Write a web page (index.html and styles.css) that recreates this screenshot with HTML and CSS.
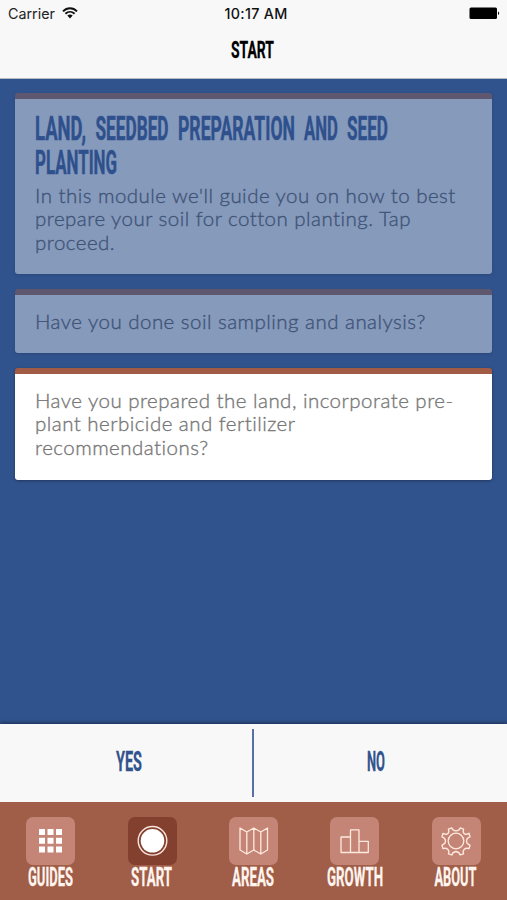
FILE: index.html
```
<!DOCTYPE html>
<html lang="en">
<head>
  <meta charset="UTF-8">
  <title>Start</title>
  <link rel="stylesheet" href="styles.css">
</head>
<body>
  <header class="header">
    <div class="status">
      <div class="carrier">
        <span>Carrier</span>
        <svg width="16" height="12" viewBox="0 0 16 12">
          <path d="M1 4.3C5 .2 11 .2 15 4.3M3.4 6.8c2.7-2.6 6.500-2.600 9.200 0" fill="none" stroke="#111" stroke-width="1.900"/>
          <path d="M5.300 8.600c1.600-1.400 3.800-1.400 5.400 0L8 11.400z" fill="#111"/>
        </svg>
      </div>
      <span class="time">10:17 AM</span>
      <svg class="battery" width="31" height="13" viewBox="0 0 31 13">
        <rect x=".5" y=".5" width="27.500" height="11.500" rx="1.500"/>
        <path d="M29 4.500c1.600.6 1.600 3 0 3.600z"/>
      </svg>
    </div>
    <svg class="heading" width="46" height="30" viewBox="0 0 46 30">
      <text class="narrow" x="1" y="24" textLength="43" lengthAdjust="spacingAndGlyphs">START</text>
    </svg>
  </header>

  <main class="cards">
    <section class="card done intro">
      <svg class="title" width="360" height="72" viewBox="0 0 360 72">
        <text class="narrow" x="0" y="31" textLength="51" lengthAdjust="spacingAndGlyphs">LAND,</text>
        <text class="narrow" x="60.500" y="31" textLength="73" lengthAdjust="spacingAndGlyphs">SEEDBED</text>
        <text class="narrow" x="143" y="31" textLength="117" lengthAdjust="spacingAndGlyphs">PREPARATION</text>
        <text class="narrow" x="269" y="31" textLength="34" lengthAdjust="spacingAndGlyphs">AND</text>
        <text class="narrow" x="312" y="31" textLength="41" lengthAdjust="spacingAndGlyphs">SEED</text>
        <text class="narrow" x="0" y="65" textLength="82" lengthAdjust="spacingAndGlyphs">PLANTING</text>
      </svg>
      <p>In this module we'll guide you on how to best<br>prepare your soil for cotton planting. Tap<br>proceed.</p>
    </section>
    <section class="card done">
      <p>Have you done soil sampling and analysis?</p>
    </section>
    <section class="card">
      <p>Have you prepared the land, incorporate pre-<br>plant herbicide and fertilizer<br>recommendations?</p>
    </section>
  </main>

  <div class="answers">
    <button class="yes">
      <svg width="28" height="36" viewBox="0 0 28 36">
        <text class="narrow" x="1" y="28" textLength="26" lengthAdjust="spacingAndGlyphs">YES</text>
      </svg>
    </button>
    <span class="divider"></span>
    <button class="no">
      <svg width="20" height="36" viewBox="0 0 20 36">
        <text class="narrow" x="1" y="28" textLength="18" lengthAdjust="spacingAndGlyphs">NO</text>
      </svg>
    </button>
  </div>

  <nav class="tabs">
    <a class="tab">
      <svg class="icon" viewBox="0 0 49 48">
        <path d="M13 12h6v6h-6zM21.500 12h6v6h-6zM30 12h6v6h-6zM13 20.800h6v6h-6zM21.500 20.800h6v6h-6zM30 20.800h6v6h-6zM13 29.500h6v6h-6zM21.500 29.500h6v6h-6zM30 29.500h6v6h-6z" fill="#fff"/>
      </svg>
      <svg class="label" width="48" height="32" viewBox="0 0 48 32">
        <text class="narrow" x="1" y="24" textLength="45" lengthAdjust="spacingAndGlyphs">GUIDES</text>
      </svg>
    </a>
    <a class="tab active">
      <svg class="icon" viewBox="0 0 49 48">
        <circle cx="24.500" cy="23.800" r="14.300" fill="none" stroke="#f8e4dc" stroke-width="1.400"/>
        <circle cx="24.500" cy="23.800" r="11.800" fill="#fff"/>
      </svg>
      <svg class="label" width="44" height="32" viewBox="0 0 44 32">
        <text class="narrow" x="1" y="24" textLength="41" lengthAdjust="spacingAndGlyphs">START</text>
      </svg>
    </a>
    <a class="tab">
      <svg class="icon line" viewBox="0 0 49 48">
        <path d="M11 11l6.800 4 7-4 7 4 6.700-4v22l-6.700 4-7-4-7 4-6.800-4zM17.800 15v22M24.800 11v22M31.800 15v22"/>
      </svg>
      <svg class="label" width="45" height="32" viewBox="0 0 45 32">
        <text class="narrow" x="1" y="24" textLength="42" lengthAdjust="spacingAndGlyphs">AREAS</text>
      </svg>
    </a>
    <a class="tab">
      <svg class="icon line" viewBox="0 0 49 48">
        <path d="M11 35.500v-15.500h9.500v15.500zM20.500 35.500v-22.700h8.500v22.700zM29 35.500v-11.200h9.300v11.200z"/>
      </svg>
      <svg class="label" width="58" height="32" viewBox="0 0 58 32">
        <text class="narrow" x="1" y="24" textLength="56" lengthAdjust="spacingAndGlyphs">GROWTH</text>
      </svg>
    </a>
    <a class="tab">
      <svg class="icon line" viewBox="0 0 49 48">
        <circle cx="24" cy="24" r="7.800"/>
        <path d="M24 13.800Q27.500 13.600 28.200 10.800L31.600 12.200Q30.300 15.300 32.700 17Q35.500 17.700 37 16.300L38 19.800Q34.700 20.800 34.500 24Q34.700 27.200 38 28.200L37 31.700Q34.200 30.500 32.300 32.300Q30.300 34.500 31.600 36.800L28.200 38Q27.500 34.800 24 34.500Q20.500 34.800 19.800 38L16.400 36.800Q17.700 34.500 15.700 32.300Q13.800 30.500 11 31.700L10 28.200Q13.300 27.200 13.500 24Q13.300 20.800 10 19.800L11 16.300Q12.500 17.700 15.300 17Q17.700 15.300 16.400 12.200L19.800 10.800Q20.500 13.600 24 13.800z"/>
      </svg>
      <svg class="label" width="46" height="32" viewBox="0 0 46 32">
        <text class="narrow" x="1.500" y="24" textLength="42" lengthAdjust="spacingAndGlyphs">ABOUT</text>
      </svg>
    </a>
  </nav>
</body>
</html>
```
FILE: styles.css
```
* { box-sizing: border-box; }
body { margin: 0; height: 900px; display: flex; flex-direction: column; background: #31538d; font-family: Lato, sans-serif; overflow: hidden; }
svg { display: block; overflow: visible; }
.narrow { font-family: Roboto, sans-serif; font-weight: 700; font-size: 24px; stroke-width: .3px; }

.header { height: 79px; background: #f8f8f8; border-bottom: 1px solid #b4bac6; display: flex; flex-direction: column; align-items: center; }
.status { width: 100%; height: 27px; padding: 0 7px 0 8px; display: grid; grid-template-columns: 1fr auto 1fr; align-items: center; font-family: Inter, sans-serif; font-size: 14.3px; color: #222; }
.carrier { display: flex; align-items: center; gap: 7px; }
.carrier svg { margin-top: -2px; }
.time { font-weight: 500; color: #111; letter-spacing: .3px; padding-left: 4px; }
.battery { justify-self: end; }
.heading { margin-top: 7px; margin-right: 1px; stroke: #000; }

.cards { flex: 1; padding: 14px 15px 0; display: flex; flex-direction: column; gap: 15px; }
.card { height: 112px; padding: 15px 20px 0; background: #fff; border-top: 6px solid #a25b45; border-radius: 3px; box-shadow: 0 1px 3px rgba(0, 0, 0, .35); color: #777; }
.card.done { height: 64px; opacity: .41; }
.card.intro { height: 181px; padding-top: 10px; }
.card p { margin: 0; font-size: 20.5px; font-weight: 300; line-height: 23.4px; letter-spacing: .47px; white-space: nowrap; -webkit-text-stroke: .35px #777; }
.title { fill: #31538d; stroke: #31538d; margin-bottom: 3px; }
.title .narrow { font-size: 33px; stroke-width: .5px; }
.done p { color: #555; -webkit-text-stroke-color: #555; }
.done .title { fill: #2a4d8c; stroke: #2a4d8c; }

.answers { height: 78px; background: #f8f8f8; display: flex; align-items: center; box-shadow: 0 -1px 4px rgba(0, 0, 0, .45); }
.answers button { height: 78px; padding: 0 0 5px; border: none; background: none; display: flex; align-items: center; justify-content: center; fill: #31538d; stroke: #31538d; }
.answers .yes { width: 252px; padding-left: 6px; }
.answers .no { flex: 1; padding-right: 9px; }
.answers .narrow { font-size: 28px; }
.divider { width: 2px; height: 68px; background: #5572a2; }

.tabs { height: 98px; padding-top: 15px; background: #a05d48; display: flex; }
.tab { flex: 1; display: flex; flex-direction: column; align-items: center; }
.icon { width: 49px; height: 48px; border-radius: 7px; background: #c48576; }
.active .icon { background: #84402f; }
.line { fill: none; stroke: #ffe9df; stroke-width: 1.3; stroke-linejoin: round; }
.label { fill: #fff4ee; stroke: #fff4ee; margin-top: -3px; }
.label .narrow { font-size: 25px; }
```
